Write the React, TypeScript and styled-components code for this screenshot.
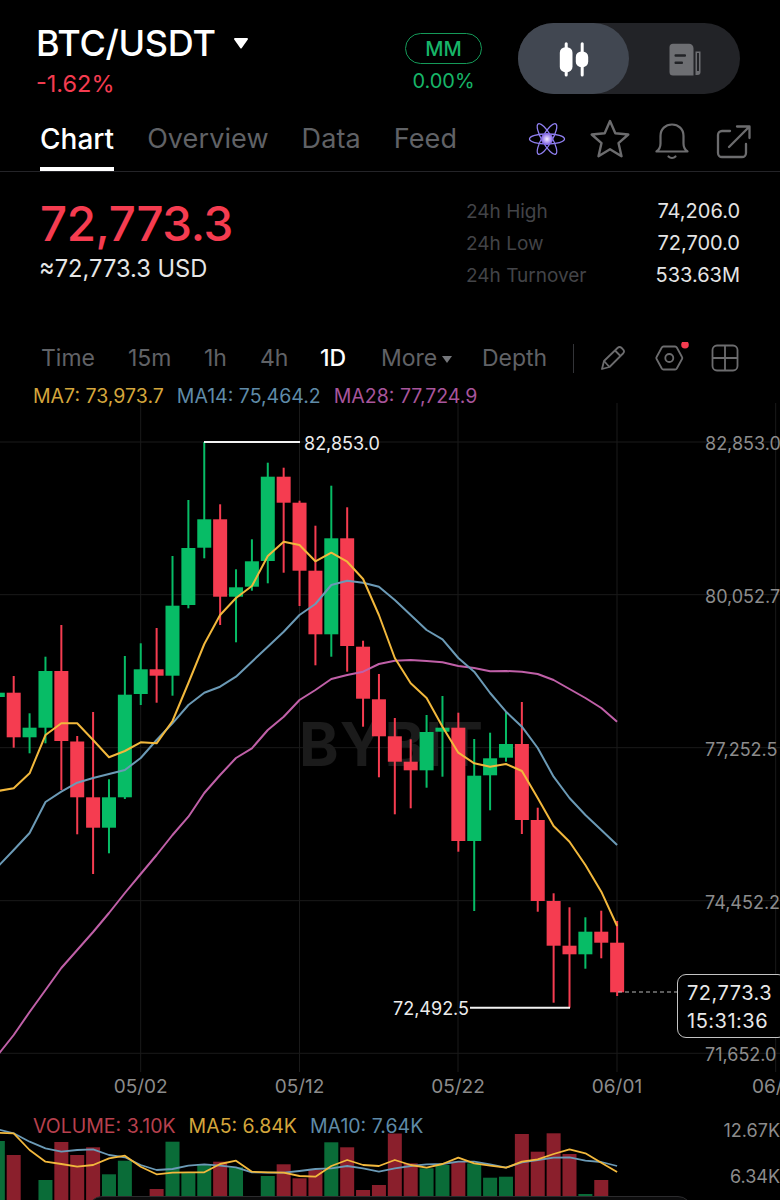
import React from 'react';
import styled, { createGlobalStyle } from 'styled-components';

const GlobalStyle = createGlobalStyle`
  html, body {
    margin: 0;
    padding: 0;
    background: #000;
    overflow: hidden;
  }
  body {
    font-family: Inter, "Noto Sans", "Liberation Sans", sans-serif;
  }
`;

const colors = {
  red: '#f53c50',
  green: '#07bc66',
  volRed: '#8a1f2c',
  volGreen: '#0a6c38',
  yellow: '#f2b83c',
  blue: '#6b9ab6',
  purple: '#c060a8',
  grid: '#1a1a1a',
  axis: '#8c8c8c',
  muted: '#606266',
};

const Page = styled.div`
  width: 780px;
  height: 1200px;
  background: #000;
  overflow: hidden;
  display: flex;
  flex-direction: column;
`;

const TopRow = styled.div`
  height: 115px;
  padding: 23px 40px 0 36px;
  box-sizing: border-box;
  display: flex;
  align-items: flex-start;
`;

const PairBlock = styled.div`
  width: 369px;
  display: flex;
  flex-direction: column;
`;

const PairTitle = styled.div`
  display: flex;
  align-items: center;
  gap: 17px;
  height: 38px;
  margin-top: 1px;
  color: #fff;
  font-size: 36px;
  font-weight: 500;
  letter-spacing: -0.3px;
`;

const PairChange = styled.div`
  color: ${colors.red};
  font-size: 23.5px;
  line-height: 30px;
  margin-top: 7px;
`;

const MarginBlock = styled.div`
  width: 77px;
  margin-top: 10px;
  display: flex;
  flex-direction: column;
  align-items: center;
  color: #17b568;
`;

const MarginPill = styled.div`
  width: 77px;
  height: 31px;
  box-sizing: border-box;
  border: 1.5px solid #159a59;
  border-radius: 16px;
  display: flex;
  align-items: center;
  justify-content: center;
  font-size: 20px;
  font-weight: 500;
`;

const MarginValue = styled.div`
  font-size: 20px;
  line-height: 26px;
  margin-top: 4px;
`;

const ViewToggle = styled.div`
  width: 222px;
  height: 71px;
  margin-left: 36px;
  border-radius: 36px;
  background: #222327;
  display: flex;
`;

const ToggleOption = styled.div<{ $active?: boolean }>`
  width: 111px;
  height: 71px;
  border-radius: 36px;
  background: ${(p) => (p.$active ? '#414751' : 'transparent')};
  display: flex;
  align-items: center;
  justify-content: center;
`;

const TabsRow = styled.div`
  height: 57px;
  box-sizing: border-box;
  border-bottom: 1px solid #242428;
  padding-left: 40px;
  display: flex;
  align-items: flex-start;
`;

const Tab = styled.div<{ $active?: boolean }>`
  height: 56px;
  box-sizing: border-box;
  margin-right: 33px;
  padding-top: 6px;
  font-size: ${(p) => (p.$active ? 28 : 27)}px;
  line-height: 36px;
  font-weight: ${(p) => (p.$active ? 500 : 400)};
  letter-spacing: ${(p) => (p.$active ? 0 : 0.1)}px;
  color: ${(p) => (p.$active ? '#fff' : colors.muted)};
  border-bottom: ${(p) => (p.$active ? '4px solid #fff' : '4px solid transparent')};
`;

const TabIcons = styled.div`
  position: absolute;
  left: 528px;
  width: 252px;
  height: 56px;
  display: flex;
  align-items: flex-start;
`;

const QuoteRow = styled.div`
  height: 162px;
  padding: 26px 40px 0 40px;
  box-sizing: border-box;
  display: flex;
  justify-content: space-between;
`;

const LastPrice = styled.div`
  color: ${colors.red};
  font-size: 47.5px;
  line-height: 52px;
  font-weight: 500;
  letter-spacing: -0.4px;
`;

const FiatPrice = styled.div`
  color: #e6e6e6;
  font-size: 23.7px;
  line-height: 28px;
  margin-top: 5px;
  margin-left: -1px;
`;

const StatGrid = styled.div`
  width: 274px;
  height: 96px;
  margin-top: -3px;
  display: grid;
  grid-template-columns: 1fr auto;
  grid-auto-rows: 32px;
  align-items: center;
  font-size: 20px;
`;

const StatLabel = styled.div`
  color: #434448;
  font-size: 19px;
`;

const StatValue = styled.div`
  color: #e4e4e4;
  text-align: right;
`;

const IntervalRow = styled.div`
  height: 48px;
  padding-left: 41px;
  display: flex;
  align-items: center;
  font-size: 23px;
  color: ${colors.muted};
`;

const Interval = styled.div<{ $w: number; $active?: boolean }>`
  width: ${(p) => p.$w}px;
  color: ${(p) => (p.$active ? '#fff' : colors.muted)};
  font-weight: ${(p) => (p.$active ? 500 : 400)};
  display: flex;
  align-items: center;
`;

const Caret = styled.span`
  width: 0;
  height: 0;
  margin: 2px 0 0 5px;
  border-left: 5px solid transparent;
  border-right: 5px solid transparent;
  border-top: 7px solid #75777b;
`;

const Separator = styled.div`
  width: 1px;
  height: 29px;
  background: #333438;
  margin-right: 26px;
`;

const ToolIcon = styled.div<{ $w: number; $top?: number }>`
  width: ${(p) => p.$w}px;
  margin-top: ${(p) => p.$top ?? 0}px;
  svg {
    display: block;
  }
`;

const LegendRow = styled.div`
  height: 28px;
  margin-bottom: -7px;
  padding-left: 33px;
  display: flex;
  align-items: center;
  gap: 13px;
  font-size: 19.5px;
  white-space: nowrap;
`;

const LegendItem = styled.span<{ $color: string }>`
  color: ${(p) => p.$color};
`;

const ChartPane = styled.div`
  position: relative;
  height: 707px;
  svg {
    display: block;
  }
`;

const PriceTag = styled.div`
  position: absolute;
  left: 677px;
  top: 571px;
  width: 110px;
  height: 64px;
  box-sizing: border-box;
  border: 1.5px solid #c4c4c4;
  border-radius: 9px;
  background: #000;
  padding: 4px 0 0 9px;
  color: #e8e8e8;
  font-size: 20px;
  line-height: 28px;
  letter-spacing: 0.5px;
`;

const VolumePane = styled.div`
  position: relative;
  height: 90px;
  overflow: hidden;
  svg {
    display: block;
  }
`;

const VolumeLegend = styled(LegendRow)`
  position: absolute;
  left: 0;
  top: 2px;
  margin: 0;
`;

const BottomSheet = styled.div`
  position: absolute;
  left: 88px;
  top: 86px;
  width: 604px;
  height: 30px;
  box-sizing: border-box;
  background: #0c0c0d;
  border: 1px solid #2c2c2e;
  border-radius: 14px 14px 0 0;
`;

// [green, wick top, body top, body bottom, wick bottom], index -1 .. 38
const candles: [number, number, number, number, number][] = [
  [1, 685, 692.7, 697, 705],
  [0, 676, 692.7, 737.3, 747.7],
  [1, 713.3, 727.7, 737.3, 753.3],
  [1, 656.7, 671, 727.7, 743.3],
  [0, 625, 671, 741, 790],
  [0, 736, 741.5, 797.3, 834.3],
  [0, 712, 797.3, 827.7, 874],
  [1, 779.3, 797.3, 827.7, 853.3],
  [1, 656, 694.7, 797.3, 799],
  [1, 643.3, 669.3, 694, 705],
  [0, 628, 669.3, 675.7, 702.7],
  [1, 556, 605.7, 675.7, 695.7],
  [1, 500, 548, 605, 608.3],
  [1, 442, 519.3, 547.7, 558.3],
  [0, 504.3, 519.3, 596.7, 625],
  [1, 569.3, 587.3, 596.7, 642.3],
  [1, 539.3, 561.3, 586.7, 590.7],
  [1, 462.7, 476.7, 561, 583.3],
  [0, 467.7, 476.7, 502.7, 572.7],
  [0, 500.7, 502.7, 570.7, 606],
  [0, 525.7, 570.7, 634.3, 665.3],
  [1, 485.7, 538.3, 634.3, 656.7],
  [0, 507.3, 538.3, 646, 671.7],
  [0, 640.7, 646.7, 698.7, 726.7],
  [0, 674, 699.3, 736.3, 777.3],
  [0, 718, 736.3, 761.7, 814.3],
  [0, 739.3, 761.7, 770.3, 808.3],
  [1, 715, 732, 770.3, 787.7],
  [1, 696, 727.7, 731.7, 776.7],
  [0, 712.7, 727.7, 841, 851.7],
  [1, 739, 775.7, 841, 911],
  [1, 732.7, 758.3, 775.3, 810.3],
  [1, 711.7, 744, 757.7, 761.7],
  [0, 702, 744, 820, 834],
  [0, 807.7, 820, 901, 911.7],
  [0, 893.3, 901, 945.7, 1002.7],
  [0, 907.3, 945.7, 954.3, 1007.7],
  [1, 917.3, 931.7, 954.3, 968.7],
  [0, 910.7, 931.7, 942.7, 958.3],
  [0, 921, 942.7, 992.3, 996],
];

const ma7 = [791, 788.3, 773.3, 735, 723.3, 723.3, 740, 757.3, 751, 742.3, 743.3, 721, 683, 644, 615, 598, 586, 556, 541.7, 545, 561.3, 552.7, 561.7, 579, 615, 658, 683.3, 698, 726.7, 752.7, 763.3, 766.7, 764, 771, 798, 826, 841.7, 865, 891.7, 926];
const ma14 = [866.7, 850, 833, 802, 791.7, 782.7, 778, 774, 770, 758, 740, 723.3, 705, 692.7, 686.7, 676.7, 661.7, 646.7, 631.7, 615, 604, 585, 580.7, 582.7, 586.7, 600, 615, 630, 639.3, 658, 671.7, 693, 711.7, 726.7, 748, 776.7, 798, 815, 830, 845];
const ma28 = [1055, 1035, 1012, 990, 968, 950, 932, 913, 893, 874, 855, 835, 816.7, 793, 775, 758, 748.3, 730, 716.7, 700, 690, 679, 675, 671.7, 664, 660.7, 660, 661, 662.3, 666, 668, 671.3, 671, 671.7, 674, 680, 689, 698, 708, 721.7];

// volume bar tops, 0 where the bar is hidden
const volumes: [number, number][] = [
  [1, 1141], [0, 1155], [0, 0], [1, 1180], [0, 1142], [0, 1155], [0, 1147.3], [1, 1174.3], [1, 1160.7], [0, 0],
  [0, 1189], [1, 1141.7], [1, 1172.3], [1, 1165], [0, 1161.7], [1, 1167.3], [0, 0], [1, 1176], [0, 1164.3], [0, 1178.3],
  [0, 1170], [1, 1142.3], [0, 1147.3], [0, 1190], [0, 1185], [0, 1133.5], [0, 1163.3], [1, 1168.3], [1, 1165], [0, 1161.7],
  [1, 1163.3], [1, 1177.7], [1, 1176.7], [0, 1134], [0, 1151.7], [0, 1133.3], [0, 1154], [1, 1194], [0, 1180], [0, 0],
];

const volMa5 = [278, 280, 330, 365, 372, 380, 375, 355, 347, 380, 403, 398, 397, 397, 372, 362, 395, 397, 398, 408, 410, 378, 360, 375, 378, 360, 375, 383, 372, 353, 370, 377, 383, 365, 358, 342, 328, 340, 368, 396];
const volMa10 = [268, 280, 305, 325, 335, 330, 328, 345, 352, 375, 390, 387, 377, 373, 377, 382, 397, 398, 398, 393, 387, 385, 378, 385, 395, 385, 378, 373, 372, 365, 365, 373, 383, 367, 360, 353, 352, 362, 366, 378];

const candleX = (i: number) => -2.18 + 15.88 * i;
const linePoints = (vals: number[]) => vals.map((y, i) => `${candleX(i).toFixed(1)},${y}`).join(' ');
const zoomPoints = (vals: number[]) => linePoints(vals.map((v) => +(1040 + v / 3).toFixed(1)));

const gridX = [140.7, 299.5, 458, 617, 775.7];
const gridY = [442, 594.7, 747.7, 900.7, 1053.3];

const AxisLabel = styled.text`
  fill: ${colors.axis};
  font-size: 18px;
`;

const MarkerLabel = styled.text`
  fill: #ececec;
  font-size: 18px;
`;

const DateLabel = styled.text`
  fill: ${colors.axis};
  font-size: 19px;
`;

const Watermark = styled.text`
  fill: #1b1b1b;
  font-size: 60px;
  font-weight: 700;
  letter-spacing: 1px;
`;

const CandleIcon = () => (
  <svg width="36" height="40" viewBox="0 0 36 40" fill="#fff">
    <rect x="8.700" y="3.200" width="3" height="34.300" rx="1.500" />
    <rect x="3.800" y="8.200" width="12.700" height="25" rx="5.500" />
    <rect x="24.700" y="3.200" width="3" height="34.300" rx="1.500" />
    <rect x="19.800" y="12.500" width="12.400" height="15.700" rx="5.500" />
  </svg>
);

const PaperIcon = () => (
  <svg width="34" height="34" viewBox="0 0 34 34">
    <path d="M5 1.800h16a4.500 4.500 0 0 1 4.500 4.500v27.200H5a3.500 3.500 0 0 1-3.500-3.500V5.300a3.500 3.500 0 0 1 3.500-3.500z" fill="#6d6e72" />
    <path d="M27.500 9.500h5V30a3 3 0 0 1-3 3h-2z" fill="#6d6e72" />
    <rect x="29" y="11" width="2" height="18" fill="#222327" />
    <rect x="6.500" y="12.300" width="11.500" height="2.500" rx="1" fill="#222327" />
    <rect x="6.500" y="19.600" width="8.500" height="2.500" rx="1" fill="#222327" />
  </svg>
);

const AtomIcon = () => (
  <svg width="38" height="36" viewBox="0 0 38 36" fill="none">
    <defs>
      <radialGradient id="core">
        <stop offset="0" stopColor="#f4ecff" />
        <stop offset="1" stopColor="#7a5ce0" />
      </radialGradient>
    </defs>
    <g stroke="#8f7ff0" strokeWidth="1.300">
      <ellipse cx="19" cy="18" rx="17.500" ry="5" />
      <ellipse cx="19" cy="18" rx="17.500" ry="5" transform="rotate(60 19 18)" />
      <ellipse cx="19" cy="18" rx="17.500" ry="5" transform="rotate(-60 19 18)" />
    </g>
    <circle cx="19" cy="18" r="6" fill="url(#core)" />
  </svg>
);

const StarIcon = () => (
  <svg width="40" height="39" viewBox="0 0 40 39" fill="none" stroke="#6c6c6e" strokeWidth="2.400" strokeLinejoin="round">
    <path d="M20 2l5.300 12.300 13 1.200-9.800 8.600 3 13.100L20 30.200 8.500 37.200l3-13.100-9.800-8.600 13-1.200z" />
  </svg>
);

const BellIcon = () => (
  <svg width="34" height="37" viewBox="0 0 34 37" fill="none" stroke="#6c6c6e" strokeWidth="2.200" strokeLinecap="round" strokeLinejoin="round">
    <path d="M1.500 28.500h31c-2.500-1.800-4-4.200-4-8V13C28.500 6 23.500 1.500 17 1.500S5.500 6 5.500 13v7.500c0 3.800-1.500 6.200-4 8z" />
    <path d="M13.500 33.500c2 2 5 2 7 0" />
  </svg>
);

const ShareIcon = () => (
  <svg width="35" height="34" viewBox="0 0 35 34" fill="none" stroke="#6c6c6e" strokeWidth="2.300" strokeLinecap="round" strokeLinejoin="round">
    <path d="M14 6H6a4 4 0 0 0-4 4v18a4 4 0 0 0 4 4h20a4 4 0 0 0 4-4v-9" />
    <path d="M13 22L33 2M21 1.500h12.500V13" />
  </svg>
);

const PencilIcon = () => (
  <svg width="26" height="26" viewBox="0 0 26 26" fill="none" stroke="#6c6c6e" strokeWidth="1.800" strokeLinejoin="round">
    <path d="M2 24l2-8L17.500 3a3 3 0 0 1 4.200 0l1.300 1.300a3 3 0 0 1 0 4.200L9.500 22z" />
    <path d="M4 16l5.500 6M15 5.500l5.500 5.500" />
  </svg>
);

const HexIcon = () => (
  <svg width="40" height="32" viewBox="0 0 40 32" fill="none">
    <path d="M8.500 4.500h11.600a2 2 0 0 1 1.700 1L27 15a2 2 0 0 1 0 2l-5.200 9.500a2 2 0 0 1-1.700 1H8.500a2 2 0 0 1-1.700-1L1.600 17a2 2 0 0 1 0-2l5.200-9.500a2 2 0 0 1 1.700-1z" stroke="#6c6c6e" strokeWidth="1.800" />
    <circle cx="14.300" cy="16" r="4" stroke="#6c6c6e" strokeWidth="1.800" />
    <circle cx="30" cy="2.800" r="3.800" fill={colors.red} />
  </svg>
);

const GridIcon = () => (
  <svg width="28" height="28" viewBox="0 0 28 28" fill="none" stroke="#6c6c6e" strokeWidth="1.800">
    <rect x="1.500" y="1.500" width="25" height="25" rx="4.500" />
    <path d="M14 1.500v25M1.500 14h25" />
  </svg>
);

const App = () => {
  return (
    <Page>
      <GlobalStyle />
      <TopRow>
        <PairBlock>
          <PairTitle>
            BTC/USDT
            <svg width="16" height="12" viewBox="0 0 16 12">
              <path d="M2 1h12a1 1 0 0 1 .8 1.600l-6 8.300a1 1 0 0 1-1.600 0l-6-8.300A1 1 0 0 1 2 1z" fill="#fff" />
            </svg>
          </PairTitle>
          <PairChange>-1.62%</PairChange>
        </PairBlock>
        <MarginBlock>
          <MarginPill>MM</MarginPill>
          <MarginValue>0.00%</MarginValue>
        </MarginBlock>
        <ViewToggle>
          <ToggleOption $active>
            <CandleIcon />
          </ToggleOption>
          <ToggleOption>
            <PaperIcon />
          </ToggleOption>
        </ViewToggle>
      </TopRow>

      <TabsRow>
        <Tab $active>Chart</Tab>
        <Tab>Overview</Tab>
        <Tab>Data</Tab>
        <Tab>Feed</Tab>
        <TabIcons>
          <ToolIcon $w={62} $top={6}>
            <AtomIcon />
          </ToolIcon>
          <ToolIcon $w={65} $top={4}>
            <StarIcon />
          </ToolIcon>
          <ToolIcon $w={61} $top={8}>
            <BellIcon />
          </ToolIcon>
          <ToolIcon $w={40} $top={10}>
            <ShareIcon />
          </ToolIcon>
        </TabIcons>
      </TabsRow>

      <QuoteRow>
        <div>
          <LastPrice>72,773.3</LastPrice>
          <FiatPrice>≈72,773.3 USD</FiatPrice>
        </div>
        <StatGrid>
          <StatLabel>24h High</StatLabel>
          <StatValue>74,206.0</StatValue>
          <StatLabel>24h Low</StatLabel>
          <StatValue>72,700.0</StatValue>
          <StatLabel>24h Turnover</StatLabel>
          <StatValue>533.63M</StatValue>
        </StatGrid>
      </QuoteRow>

      <IntervalRow>
        <Interval $w={87}>Time</Interval>
        <Interval $w={76}>15m</Interval>
        <Interval $w={56}>1h</Interval>
        <Interval $w={60}>4h</Interval>
        <Interval $w={61} $active>
          1D
        </Interval>
        <Interval $w={101}>
          More
          <Caret />
        </Interval>
        <Interval $w={91}>Depth</Interval>
        <Separator />
        <ToolIcon $w={55}>
          <PencilIcon />
        </ToolIcon>
        <ToolIcon $w={56}>
          <HexIcon />
        </ToolIcon>
        <ToolIcon $w={28}>
          <GridIcon />
        </ToolIcon>
      </IntervalRow>

      <LegendRow>
        <LegendItem $color="#d4a63c">MA7: 73,973.7</LegendItem>
        <LegendItem $color="#5f8ba8">MA14: 75,464.2</LegendItem>
        <LegendItem $color="#a8559c">MA28: 77,724.9</LegendItem>
      </LegendRow>

      <ChartPane>
        <svg width="780" height="707" viewBox="0 403 780 707">
          {gridX.map((x) => (
            <line key={x} x1={x} x2={x} y1={403} y2={1072} stroke={colors.grid} strokeWidth="1" />
          ))}
          {gridY.map((y) => (
            <line key={y} x1={0} x2={780} y1={y} y2={y} stroke={colors.grid} strokeWidth="1" />
          ))}
          <Watermark x={299} y={766}>
            BYBIT
          </Watermark>

          {candles.map(([up, wt, bt, bb, wb], i) => {
            const x = candleX(i);
            const fill = up ? colors.green : colors.red;
            return (
              <g key={i} fill={fill}>
                <rect x={x - 1} y={wt} width={2} height={wb - wt} />
                <rect x={x - 7} y={bt} width={14} height={bb - bt} />
              </g>
            );
          })}

          <polyline points={linePoints(ma28)} fill="none" stroke={colors.purple} strokeWidth="2" strokeLinejoin="round" />
          <polyline points={linePoints(ma14)} fill="none" stroke={colors.blue} strokeWidth="2" strokeLinejoin="round" />
          <polyline points={linePoints(ma7)} fill="none" stroke={colors.yellow} strokeWidth="2" strokeLinejoin="round" />

          <line x1={204} x2={300} y1={442} y2={442} stroke="#f2f2f2" strokeWidth="2" />
          <MarkerLabel x={304} y={449.5}>
            82,853.0
          </MarkerLabel>
          <line x1={470} x2={570} y1={1007.7} y2={1007.7} stroke="#f2f2f2" strokeWidth="2" />
          <MarkerLabel x={469} y={1014.5} textAnchor="end">
            72,492.5
          </MarkerLabel>
          <line x1={618} x2={677} y1={992} y2={992} stroke="#b8b8b8" strokeWidth="1" strokeDasharray="4 3" />

          <AxisLabel x={705} y={449.5}>
            82,853.0
          </AxisLabel>
          <AxisLabel x={705} y={602.5}>
            80,052.7
          </AxisLabel>
          <AxisLabel x={705} y={755.5}>
            77,252.5
          </AxisLabel>
          <AxisLabel x={705} y={908.5}>
            74,452.2
          </AxisLabel>
          <AxisLabel x={705} y={1060.5}>
            71,652.0
          </AxisLabel>

          {['05/02', '05/12', '05/22', '06/01'].map((d, i) => (
            <DateLabel key={d} x={gridX[i]} y={1092.5} textAnchor="middle">
              {d}
            </DateLabel>
          ))}
          <DateLabel x={752} y={1092.5}>
            06/
          </DateLabel>
        </svg>
        <PriceTag>
          72,773.3
          <br />
          15:31:36
        </PriceTag>
      </ChartPane>

      <VolumePane>
        <svg width="780" height="90" viewBox="0 1110 780 90">
          {volumes.map(([up, top], i) =>
            top ? (
              <rect key={i} x={candleX(i) - 7} y={top} width={14} height={1200 - top} fill={up ? colors.volGreen : colors.volRed} />
            ) : null
          )}
          <polyline points={zoomPoints(volMa10)} fill="none" stroke={colors.blue} strokeWidth="1.800" strokeLinejoin="round" />
          <polyline points={zoomPoints(volMa5)} fill="none" stroke={colors.yellow} strokeWidth="1.800" strokeLinejoin="round" />
          <AxisLabel x={780} y={1136.5} textAnchor="end">
            12.67K
          </AxisLabel>
          <AxisLabel x={780} y={1182.5} textAnchor="end">
            6.34K
          </AxisLabel>
        </svg>
        <VolumeLegend>
          <LegendItem $color="#b8404e">VOLUME: 3.10K</LegendItem>
          <LegendItem $color="#d4a63c">MA5: 6.84K</LegendItem>
          <LegendItem $color="#5f8ba8">MA10: 7.64K</LegendItem>
        </VolumeLegend>
        <BottomSheet />
      </VolumePane>
    </Page>
  );
};

export default App;
